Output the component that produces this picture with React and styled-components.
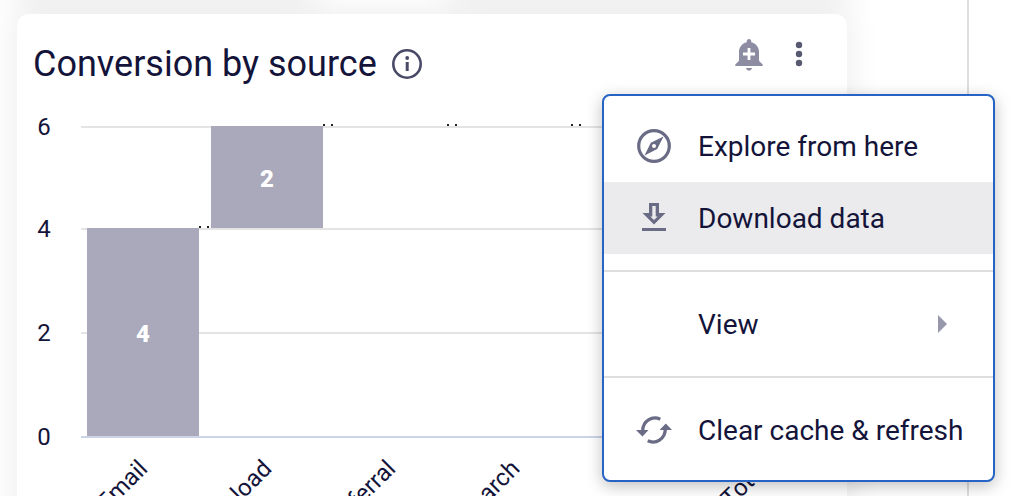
import React from 'react'
import styled, { createGlobalStyle } from 'styled-components'

const steps = [
  { label: 'Email', from: 0, to: 4 },
  { label: 'Download', from: 4, to: 6 },
  { label: 'Referral', from: 6, to: 6 },
  { label: 'Search', from: 6, to: 6 },
  { label: '', from: 6, to: 6 },
  { label: 'Total', from: 0, to: 6 },
]

// y position of each grid line inside the plot
const levels = { 6: 12, 4: 114, 2: 218, 0: 322 }
const ticks = [6, 4, 2, 0]

const InfoIcon = () => (
  <svg width="32" height="32" viewBox="0 0 32 32" aria-hidden="true">
    <circle cx="16" cy="16" r="13.700" fill="none" stroke="#484a68" strokeWidth="2.600" />
    <path d="M16.200 14v9" stroke="#484a68" strokeWidth="3" />
    <circle cx="16.200" cy="10" r="1.900" fill="#484a68" />
  </svg>
)

const BellIcon = () => (
  <svg width="28" height="32" viewBox="0 0 28 32" aria-hidden="true">
    <path
      fill="#8c8da3"
      d="M14 0c1.400 0 2.300 1 2.300 2.400v.9c4.500 1.200 7.700 4.800 7.700 9.400v8.300c0 1.600 1.600 2.300 3.700 4.500V27H.3v-1.500C2.400 23.300 4 22.600 4 21v-8.300c0-4.600 3.200-8.200 7.700-9.400v-.9C11.700 1 12.600 0 14 0z"
    />
    <path fill="#8c8da3" d="M11 29h6c-.4 1.600-1.600 2.600-3 2.600s-2.600-1-3-2.600z" />
    <path d="M14 9v12M8 15h12" stroke="#fff" strokeWidth="2.800" />
  </svg>
)

const DotsIcon = () => (
  <svg width="28" height="32" viewBox="0 0 28 32" fill="#575970" aria-hidden="true">
    <circle cx="14" cy="6" r="3.200" />
    <circle cx="14" cy="15" r="3.200" />
    <circle cx="14" cy="24" r="3.200" />
  </svg>
)

const CompassIcon = () => (
  <svg width="36" height="36" viewBox="0 0 36 36" aria-hidden="true">
    <circle cx="18" cy="18" r="15.300" fill="none" stroke="#6a6b85" strokeWidth="3.200" />
    <path
      fill="#6a6b85"
      fillRule="evenodd"
      d="M27.500 8.500l-6.300 12.600-12.700 6.400 6.300-12.700zM18 16a2 2 0 1 0 0 4 2 2 0 0 0 0-4z"
    />
  </svg>
)

const DownloadIcon = () => (
  <svg width="36" height="36" viewBox="0 0 36 36" fill="#6a6b85" aria-hidden="true">
    <path
      fillRule="evenodd"
      d="M13 3h10v10h6.500L18 24.500 6.500 13H13zM16.300 6v10.500h-2l3.700 3.500 3.700-3.500h-2V6z"
    />
    <path d="M6 28h24v3H6z" />
  </svg>
)

const RefreshIcon = () => (
  <svg width="36" height="36" viewBox="0 0 36 36" aria-hidden="true">
    <g fill="none" stroke="#6a6b85" strokeWidth="3.300">
      <path d="M24.300 7.200C16 3.500 7 9 6.700 18.500" />
      <path d="M11.700 28.800C20 32.500 29 27 29.300 17.500" />
    </g>
    <path fill="#6a6b85" d="M0 18h12.500L6.500 24.500zM23.500 18H36L29.800 11.500z" />
  </svg>
)

const Chart = () => (
  <Plot role="img" aria-label="Waterfall chart of conversion by source">
    {ticks.map(tick => (
      <React.Fragment key={tick}>
        <rect x="64" y={levels[tick]} width="100%" height="2" fill={tick ? '#e4e4e4' : '#ccd3e8'} />
        <TickLabel x="27" y={levels[tick] + 9}>
          {tick}
        </TickLabel>
      </React.Fragment>
    ))}
    {steps.map((step, i) => {
      const x = 70 + i * 124
      const top = levels[step.to]
      const height = levels[step.from] - top
      return (
        <React.Fragment key={i}>
          <rect x={x} y={top} width="112" height={height} fill="#a9a9bb" />
          {i < steps.length - 1 && (
            <path
              d={`M${x + 112} ${top - 1}h12`}
              stroke="#222"
              strokeWidth="2"
              strokeDasharray="2 6"
            />
          )}
          {height > 0 && (
            <BarLabel x={x + 56} y={top + height / 2 + 10}>
              {step.to - step.from}
            </BarLabel>
          )}
          <StepLabel transform={`translate(${x + 62} 356) rotate(-45)`}>{step.label}</StepLabel>
        </React.Fragment>
      )
    })}
  </Plot>
)

const App = () => {
  return (
    <Page>
      <GlobalStyle />
      <Board>
        <PreviousRow>
          <PreviousCard $grow={3} />
          <PreviousCard $grow={4} />
        </PreviousRow>
        <Card>
          <CardHeader>
            <Title>Conversion by source</Title>
            <IconButton aria-label="About this tile">
              <InfoIcon />
            </IconButton>
            <Actions>
              <IconButton aria-label="Create alert">
                <BellIcon />
              </IconButton>
              <IconButton aria-label="Tile actions" aria-expanded="true">
                <DotsIcon />
              </IconButton>
            </Actions>
          </CardHeader>
          <Chart />
          <Menu role="menu">
            <MenuGroup>
              <MenuItem role="menuitem">
                <CompassIcon />
                <span>Explore from here</span>
              </MenuItem>
              <MenuItem role="menuitem" $active>
                <DownloadIcon />
                <span>Download data</span>
              </MenuItem>
            </MenuGroup>
            <MenuGroup>
              <MenuItem role="menuitem" aria-haspopup="true">
                <IconGap />
                <span>View</span>
                <Caret viewBox="0 0 9 18" aria-hidden="true">
                  <path d="M0 0l9 9-9 9z" />
                </Caret>
              </MenuItem>
            </MenuGroup>
            <MenuGroup>
              <MenuItem role="menuitem">
                <RefreshIcon />
                <span>Clear cache &amp; refresh</span>
              </MenuItem>
            </MenuGroup>
          </Menu>
        </Card>
      </Board>
      <Sidebar />
    </Page>
  )
}

const GlobalStyle = createGlobalStyle`
  * {
    box-sizing: border-box;
  }

  body {
    margin: 0;
    background: #fff;
    color: #14143a;
    font-family: Roboto, "Liberation Sans", sans-serif;
  }
`

const Page = styled.div`
  display: flex;
  height: 100vh;
  overflow: hidden;
`

const Board = styled.main`
  flex: 1;
  padding: 0 120px 0 17px;
`

const shadow = '0 0 32px 4px rgba(0, 0, 0, 0.07)'

/* the row above is scrolled out, only its shadow is in view */
const PreviousRow = styled.div`
  display: flex;
  gap: 140px;
  height: 40px;
  margin-top: -40px;
  margin-bottom: 14px;
`

const PreviousCard = styled.div`
  flex: ${props => props.$grow};
  box-shadow: ${shadow};
`

const Sidebar = styled.aside`
  width: 44px;
  border-left: 2px solid #dedede;
`

const Card = styled.section`
  position: relative;
  background: #fff;
  border-radius: 12px;
  box-shadow: ${shadow};
`

const CardHeader = styled.header`
  display: flex;
  align-items: center;
  height: 100px;
  padding: 0 34px 0 16px;
`

const Title = styled.h2`
  margin: 0 14px 0 0;
  font-size: 36px;
  font-weight: 400;
  line-height: 44px;
`

const IconButton = styled.button`
  display: flex;
  padding: 0;
  border: 0;
  background: none;
  cursor: pointer;
`

const Actions = styled.div`
  display: flex;
  gap: 22px;
  margin-left: auto;
  padding-bottom: 18px;
`

const Plot = styled.svg`
  display: block;
  width: 100%;
  height: 460px;
  font-size: 24px;
  fill: #14143a;
`

const TickLabel = styled.text`
  text-anchor: middle;
`

const BarLabel = styled.text`
  fill: #fff;
  font-weight: 900;
  text-anchor: middle;
`

const StepLabel = styled.text`
  text-anchor: end;
`

const Menu = styled.div`
  position: absolute;
  top: 80px;
  right: -148px;
  width: 393px;
  padding: 14px 0;
  border: 2px solid #2563c4;
  border-radius: 8px;
  background: #fff;
  box-shadow: 0 4px 16px rgba(0, 0, 0, 0.25);
`

const MenuGroup = styled.div`
  & + & {
    margin-top: 16px;
    padding-top: 16px;
    border-top: 2px solid #dedede;
  }
`

const MenuItem = styled.button`
  display: flex;
  align-items: center;
  gap: 26px;
  width: 100%;
  height: 72px;
  padding: 0 24px 0 32px;
  border: 0;
  background: ${props => (props.$active ? '#ebebed' : 'none')};
  color: inherit;
  font-family: inherit;
  font-size: 28px;
  text-align: left;
  white-space: nowrap;
  cursor: pointer;

  svg {
    flex-shrink: 0;
  }
`

const IconGap = styled.i`
  width: 36px;
`

const Caret = styled.svg`
  width: 9px;
  height: 18px;
  margin-left: auto;
  margin-right: 22px;
  fill: #9798ab;
`

export default App
